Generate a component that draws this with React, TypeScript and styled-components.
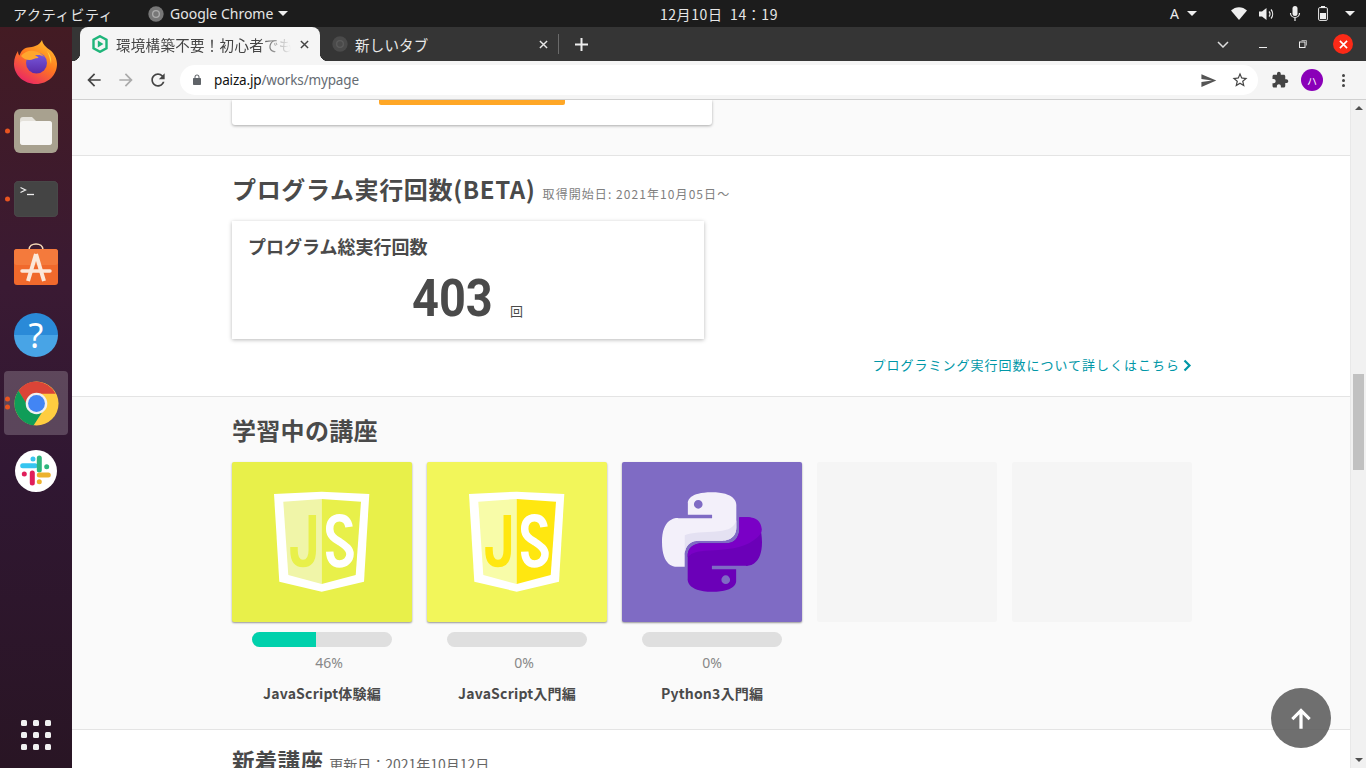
import React from 'react';
import styled, { createGlobalStyle } from 'styled-components';

const Global = createGlobalStyle`
  html, body { margin: 0; padding: 0; height: 100%; overflow: hidden; }
  body { font-family: "Noto Sans CJK JP", "Noto Sans", sans-serif; }
  * { box-sizing: border-box; }
`;

const CJK = `"Noto Sans CJK JP", "Noto Sans", sans-serif`;

const Screen = styled.div`
  width: 1366px; height: 768px; display: flex; flex-direction: column; overflow: hidden; position: relative;
`;

/* ---------- GNOME top bar ---------- */
const TopBar = styled.header`
  height: 27px; flex: none; background: #1c1c1c; color: #e6e6e6; display: grid;
  grid-template-columns: 1fr auto 1fr; align-items: center; font-size: 14px; font-family: ${CJK};
`;
const TopLeft = styled.div`display: flex; align-items: center; padding-left: 13px;`;
const Activities = styled.span`width: 135px; font-size: 14px; letter-spacing: .7px;`;
const AppName = styled.span`display: flex; align-items: center; gap: 6px; font-family: "Noto Sans", sans-serif; font-size: 14px;`;
const Clock = styled.span`font-size: 14px; letter-spacing: .6px; padding-left: 72px; white-space: pre;`;
const TopRight = styled.div`display: flex; align-items: center; justify-content: flex-end; height: 27px;`;
const Caret = styled.i`
  display: block; width: 0; height: 0; border-left: 5px solid transparent; border-right: 5px solid transparent;
  border-top: 5px solid #eee; margin-left: ${p => p.$ml ?? 0}px;
`;
const Tray = styled.span`display: flex; align-items: center; justify-content: center; margin-left: ${p => p.$ml}px;`;
const Letter = styled.span`font-family: "Noto Sans", sans-serif; font-size: 14px; color: #ececec; margin-right: 8px;`;

const Body = styled.div`flex: 1; display: flex; min-height: 0;`;

/* ---------- Ubuntu dock ---------- */
const Dock = styled.nav`
  width: 72px; flex: none; display: flex; flex-direction: column; align-items: center; padding-top: 2px;
  background: linear-gradient(180deg, #431b23 0%, #3a1a33 35%, #301732 60%, #291524 100%);
`;
const DockItem = styled.div`
  position: relative; width: 64px; height: 64px; margin: 2px 0; flex: none; display: flex; align-items: center; justify-content: center;
  border-radius: 4px; background: ${p => (p.$active ? 'rgba(255,255,255,.2)' : 'transparent')};
`;
const RunDots = styled.span`
  position: absolute; left: 1px; top: 50%; transform: translateY(-50%); display: flex; flex-direction: column; gap: 3px;
`;
const RunDot = styled.i`display: block; width: 5px; height: 5px; border-radius: 50%; background: #e95420;`;
const HelpBadge = styled.span`
  width: 44px; height: 44px; border-radius: 50%; background: linear-gradient(180deg, #2a8ad8 50%, #48a4e6 50%);
  color: #fff; font: 400 34px/44px "Noto Sans", sans-serif; text-align: center;
`;
const AppsGrid = styled.div`
  margin-top: auto; margin-bottom: 18px; display: grid; grid-template-columns: repeat(3, 6px); gap: 6px;
`;
const AppsDot = styled.i`display: block; width: 6px; height: 6px; border-radius: 1.5px; background: #f1f1f1;`;

/* ---------- Chrome frame ---------- */
const Browser = styled.div`flex: 1; min-width: 0; display: flex; flex-direction: column;`;
const TabStrip = styled.div`height: 34px; flex: none; background: #353535; display: flex; align-items: stretch; padding-left: 8px; color: #eee;`;
const ActiveTab = styled.div`
  position: relative; width: 240px; background: #f5f5f5; border-radius: 8px 8px 0 0; display: flex; align-items: center;
  padding: 0 11px 0 12px; color: #444; font-size: 14px;
  &::before, &::after {
    content: ""; position: absolute; bottom: 0; width: 8px; height: 8px;
  }
  &::before { left: -8px; background: radial-gradient(circle at 0 0, transparent 8px, #f5f5f5 8.5px); }
  &::after { right: -8px; background: radial-gradient(circle at 100% 0, transparent 8px, #f5f5f5 8.5px); }
`;
const TabTitle = styled.span`
  margin-left: 8px; width: 175px; white-space: nowrap; overflow: hidden; font-size: 14.5px; letter-spacing: .3px;
  -webkit-mask-image: linear-gradient(90deg, #000 82%, transparent 100%);
  mask-image: linear-gradient(90deg, #000 82%, transparent 100%);
`;
const TabClose = styled.span`margin-left: auto; display: flex;`;
const IdleTab = styled.div`
  width: 238px; display: flex; align-items: center; padding: 0 10px 0 12px; font-size: 14.5px; color: #e8e8e8;
`;
const IdleTitle = styled.span`margin-left: 7px; letter-spacing: .2px;`;
const TabSep = styled.i`display: block; width: 1px; height: 20px; background: #6a6a6a; align-self: center;`;
const NewTab = styled.span`display: flex; align-items: center; margin-left: 16px;`;
const WinControls = styled.div`margin-left: auto; display: flex; align-items: center; padding-right: 3px;`;
const WinBtn = styled.span`display: flex; align-items: center; justify-content: center; width: 40px;`;
const CloseCircle = styled.span`
  width: 20px; height: 20px; border-radius: 50%; background: #fb2a17; display: flex; align-items: center; justify-content: center;
`;

const Toolbar = styled.div`
  height: 39px; flex: none; background: #f5f5f5; border-bottom: 1px solid #d0d0d0; display: flex; align-items: center; padding-left: 6px;
`;
const NavBtn = styled.span`width: 32px; display: flex; align-items: center; justify-content: center; flex: none;`;
const Omnibox = styled.div`
  width: 1078px; margin-left: 6px; height: 30px; flex: none; border-radius: 15px; background: #fff; display: flex; align-items: center; padding: 0 9px 0 11px;
`;
const Domain = styled.span`margin-left: 11px; font: 13.5px "Noto Sans", sans-serif; color: #111; letter-spacing: -.15px;`;
const UrlPath = styled.span`color: #666c73;`;
const OmniEnd = styled.span`margin-left: auto; display: flex; gap: 14px; align-items: center; padding-right: 0;`;
const ToolEnd = styled.span`display: flex; align-items: center; margin-left: 6px;`;
const Avatar = styled.span`
  width: 22px; height: 22px; border-radius: 50%; background: #8a00b8; color: #fff; font-size: 10px; display: flex;
  align-items: center; justify-content: center; margin: 0 0 0 5px;
`;
const Kebab = styled.span`display: flex; flex-direction: column; gap: 2px; margin-left: 19px;`;
const KebabDot = styled.i`display: block; width: 3px; height: 3px; border-radius: 50%; background: #444;`;

/* ---------- page ---------- */
const Viewport = styled.div`flex: 1; min-height: 0; display: flex; overflow: hidden;`;
const Page = styled.main`flex: 1; min-width: 0; overflow: hidden; display: flex; flex-direction: column; border-right: 1px solid #e8e8e8;`;
const Section = styled.section`
  flex: none; height: ${p => p.$h}px; background: ${p => (p.$tint ? '#fafafa' : '#fff')};
  border-bottom: ${p => (p.$last ? 'none' : '1px solid #e4e4e4')}; padding-left: 160px; padding-top: ${p => p.$pt ?? 0}px;
`;
const OldCard = styled.div`
  width: 480px; height: 25px; background: #fff; border-radius: 0 0 3px 3px; box-shadow: 0 1px 3px rgba(0,0,0,.32); padding-left: 147px;
`;
const OrangeBtn = styled.div`width: 186px; height: 5px; background: #ffa726; border-radius: 0 0 2px 2px;`;
const HeadRow = styled.div`display: flex; align-items: baseline; height: 36px;`;
const Heading = styled.h2`
  margin: 0; font: 700 ${p => p.$size ?? 24}px/36px ${CJK}; color: #4a4a4a; letter-spacing: ${p => p.$ls ?? .65}px; white-space: nowrap;
`;
const HeadNote = styled.span`margin-left: 7px; font: 400 12px ${CJK}; color: #808080; letter-spacing: 1.07px; white-space: nowrap;`;
const UpdateNote = styled.span`margin-left: 6px; font: 400 14px ${CJK}; color: #666; white-space: nowrap;`;
const CountCard = styled.div`
  margin-top: 14px; width: 472px; height: 118px; background: #fff; box-shadow: 0 1px 4px rgba(0,0,0,.28);
  padding: 12px 16px 0; display: flex; flex-direction: column;
`;
const CardTitle = styled.div`font: 700 18px/26px ${CJK}; color: #4a4a4a;`;
const CountRow = styled.div`display: flex; align-items: baseline; margin-top: 9px; padding-left: 164px;`;
const CountNum = styled.span`
  display: inline-block; width: 79px; font: 700 51px/62px "Roboto", "Noto Sans", sans-serif; color: #4a4a4a; white-space: nowrap;
  transform: scaleX(.92); transform-origin: left center;
`;
const CountUnit = styled.span`margin-left: 19px; font: 400 13px ${CJK}; color: #4a4a4a;`;
const DetailLink = styled.a`
  margin-top: 15px; width: 960px; display: flex; justify-content: flex-end; align-items: center; gap: 3px;
  font: 400 13px/22px ${CJK}; color: #0097a7; letter-spacing: 1px; text-decoration: none;
`;
const Tiles = styled.div`margin-top: 14px; display: grid; grid-template-columns: repeat(5, 180px); column-gap: 15px;`;
const Course = styled.article`display: flex; flex-direction: column; align-items: center;`;
const Tile = styled.div`
  width: 180px; height: 160px; border-radius: 2px; background: ${p => p.$bg};
  box-shadow: ${p => (p.$flat ? 'none' : '0 1px 2px rgba(0,0,0,.4)')}; display: flex; align-items: center; justify-content: center;
`;
const Bar = styled.div`margin-top: 10px; width: 140px; height: 15px; border-radius: 8px; background: #dfdfdf; overflow: hidden;`;
const BarFill = styled.div`height: 100%; background: #00d1ac;`;
const Pct = styled.div`
  margin-top: 6px; font: 400 14px/20px "Noto Sans", sans-serif; color: #888; padding-left: ${p => p.$shift ?? 0}px;
`;
const CourseName = styled.div`margin-top: 10px; font: 700 14px/20px ${CJK}; color: #4a4a4a; letter-spacing: .2px; white-space: nowrap;`;

const Scrollbar = styled.div`width: 15px; flex: none; background: #f1f1f1; display: flex; flex-direction: column; align-items: center; position: relative;`;
const ArrowUp = styled.i`
  margin-top: 6px; width: 0; height: 0; border-left: 4px solid transparent; border-right: 4px solid transparent; border-bottom: 4px solid #505050;
`;
const Thumb = styled.div`margin-top: 264px; width: 11px; height: 96px; background: #c1c1c1;`;
const ArrowDown = styled.i`
  margin-top: auto; margin-bottom: 6px; width: 0; height: 0; border-left: 4px solid transparent; border-right: 4px solid transparent; border-top: 4px solid #505050;
`;
const ToTop = styled.button`
  position: absolute; left: 1271px; top: 688px; width: 60px; height: 60px; border: 0; border-radius: 50%;
  background: rgba(90,90,90,.87); display: flex; align-items: center; justify-content: center; padding: 0;
`;

/* ---------- drawings ---------- */
const Mat = ({ d, size = 20, fill = '#444' }: { d: string; size?: number; fill?: string }) => (
  <svg width={size} height={size} viewBox="0 0 24 24" fill={fill}><path d={d} /></svg>
);

const ChromeLogo = ({ size, mono, ring = .55 }: { size: number; mono?: string; ring?: number }) => (
  <svg width={size} height={size} viewBox="0 0 48 48">
    {mono ? (
      <>
        <circle cx="24" cy="24" r="23" fill={mono} />
        <circle cx="24" cy="24" r="12" fill="#d8d8d8" opacity={ring} />
        <circle cx="24" cy="24" r="8" fill={mono} />
      </>
    ) : (
      <>
        <circle cx="24" cy="24" r="23.5" fill="#ffcd40" />
        <path d="M24 .5A23.5 23.5 0 0 0 4.8 10.4L14 27 24 13.5h20.4A23.5 23.5 0 0 0 24 .5z" fill="#db4437" />
        <path d="M4.8 10.4A23.5 23.5 0 0 0 21 47.3L31.5 31 17 30z" fill="#0f9d58" />
        <circle cx="24" cy="24" r="11.5" fill="#f1f1f1" />
        <circle cx="24" cy="24" r="9" fill="#4285f4" />
      </>
    )}
  </svg>
);

const Firefox = () => (
  <svg width="46" height="48" viewBox="0 0 46 48">
    <defs>
      <linearGradient id="ffa" x1=".8" y1="0" x2=".2" y2="1">
        <stop offset="0" stopColor="#ffc22e" /><stop offset=".45" stopColor="#ff7a1f" /><stop offset="1" stopColor="#e8206a" />
      </linearGradient>
      <linearGradient id="ffb" x1=".5" y1="0" x2=".5" y2="1">
        <stop offset="0" stopColor="#7a5de0" /><stop offset="1" stopColor="#5a2aa8" />
      </linearGradient>
    </defs>
    <path d="M29 1c1 5 4 7 8 10 5 4 7 10 7 14 0 11-9 20-21 20C11 45 1 36 1 25c0-6 2-10 4-13 0 2 .5 3.500 1.500 4.500C8 12 11 9 15 8.500 20 8 26 7 29 1z" fill="url(#ffa)" />
    <circle cx="23.500" cy="24" r="10.500" fill="url(#ffb)" />
    <path d="M8 17c3-4 8-6 13-5 5 .8 8 3 10 6-3-2-6-2.500-9-1.500 2 .5 3 1.500 3.500 2.500-4 0-6 2-9 2-3.500 0-6-1.500-8.500-4z" fill="#ffa62e" />
    <path d="M34 12c3 3 5 8 4 13-1-5-2-9-4-13z" fill="#ffd23f" />
  </svg>
);

const Files = () => (
  <svg width="44" height="44" viewBox="0 0 44 44">
    <rect width="44" height="44" rx="6" fill="#a8a18f" />
    <path d="M6 11a3 3 0 0 1 3-3h9l4 4h13a3 3 0 0 1 3 3v18a3 3 0 0 1-3 3H9a3 3 0 0 1-3-3z" fill="#e4e1da" />
    <rect x="6" y="12" width="32" height="24" rx="3" fill="#f7f6f4" />
  </svg>
);

const Terminal = () => (
  <svg width="44" height="36" viewBox="0 0 44 36">
    <rect width="44" height="36" rx="5" fill="#444" stroke="#555" strokeWidth=".6" />
    <path d="M6.500 6.500l5 2.500-5 2.500" stroke="#eee" strokeWidth="1.300" fill="none" />
    <path d="M13 13.500h7" stroke="#eee" strokeWidth="1.300" />
  </svg>
);

const Store = () => (
  <svg width="44" height="44" viewBox="0 0 44 44" overflow="visible">
    <path d="M15 5c0-8 14-8 14 0" stroke="#f6d9b8" strokeWidth="1.600" fill="none" />
    <rect y="4" width="44" height="36" rx="3" fill="#f0692c" />
    <rect y="4" width="44" height="16" rx="3" fill="#f47a3c" />
    <path d="M22 9l-8 27M22 9l8 27" stroke="#fbe7d9" strokeWidth="4" fill="none" />
    <path d="M8 26h28" stroke="#fbe7d9" strokeWidth="3.500" strokeLinecap="round" />
  </svg>
);

const Slack = () => (
  <svg width="42" height="42" viewBox="0 0 42 42">
    <circle cx="21" cy="21" r="21" fill="#fff" />
    <g strokeWidth="5" strokeLinecap="round" fill="none">
      <path d="M7.700 15.700H20M18 9v0" stroke="#36c5f0" />
      <path d="M24.300 8v12M31.700 16.700v0" stroke="#2eb67d" />
      <path d="M24.300 25H33.300M24.300 31.700v0" stroke="#ecb22e" />
      <path d="M17.300 23v10M9.300 24v0" stroke="#e01e5a" />
    </g>
  </svg>
);

const PaizaIcon = () => (
  <svg width="16" height="18" viewBox="0 0 16 18">
    <path d="M8 1.200l6.500 3.600v8.400L8 16.800l-6.500-3.600V4.800z" fill="none" stroke="#1fb57a" strokeWidth="2.400" />
    <path d="M5.800 5.500l5.600 3.500-5.600 3.500z" fill="#1fb57a" />
  </svg>
);

const Cross = ({ color = '#444', size = 9, w = 1.6 }: { color?: string; size?: number; w?: number }) => (
  <svg width={size} height={size} viewBox="0 0 10 10"><path d="M1 1l8 8M9 1l-8 8" stroke={color} strokeWidth={w} /></svg>
);

const JsShield = ({ left, right, j }: { left: string; right: string; j: string }) => (
  <svg width="180" height="160" viewBox="0 0 180 160">
    <path d="M42 32L89.700 29.700 137.300 32 132 119.700 89.700 129.700 47.300 119.700z" fill="#fff" />
    <path d="M51.300 39.700L89.700 37V122L56.300 113z" fill={left} />
    <path d="M89.700 37L129 39.700 123.700 113 89.700 122z" fill={right} />
    <path d="M80.300 53V88C80.300 97 77 101.500 71 101.500 65 101.500 62 97 62 88V85" stroke={j} strokeWidth="7.500" fill="none" />
    <path d="M117 65C116 58 112 55.700 107.500 55.700 101 55.700 97.700 60.500 97.700 67 97.700 74 103 77 108 80 114 84 118 87 118 92 118 98 113 102 107.500 102 101 102 98 97 97.700 89.700" stroke="#fff" strokeWidth="7.500" fill="none" />
  </svg>
);

const PythonLogo = () => (
  <svg width="100" height="100" viewBox="0 0 110.600 110">
    <path d="M54.900 0C26.800 0 28.600 12.200 28.600 12.200l0 12.600h26.800v3.800H18S0 26.500 0 55c0 28.400 15.700 27.400 15.700 27.400h9.400V69.200s-.5-15.700 15.500-15.700h26.600s15 .2 15-14.500V14.700S84.500 0 54.900 0zM40.100 8.500a4.800 4.800 0 1 1 0 9.600 4.800 4.800 0 0 1 0-9.600z" fill="#f3f0fa" />
    <path d="M25.100 69.200s-.5-15.700 15.500-15.700h26.600s15 .2 15-14.500v-8c-2 8-8 11-20 12-16 1.300-30 1-37 4.500z" fill="#e4e1f2" />
    <path d="M55.700 110c28.100 0 26.300-12.200 26.300-12.200V85.200H55.200v-3.800h37.400S110.600 83.500 110.600 55c0-28.400-15.700-27.400-15.700-27.400h-9.400v13.200s.5 15.700-15.500 15.700H43.400s-15-.2-15 14.500v24.300S26.100 110 55.700 110zm14.800-8.500a4.800 4.800 0 1 1 0-9.600 4.800 4.800 0 0 1 0 9.600z" fill="#6b00b8" />
    <path d="M85.500 40.800s.5 15.700-15.500 15.700H43.400s-15-.2-15 14.500v1c5-7 14-7 30-8 20-1 36-4 47-14 3-3 5-5 5-9-1-9-6-13.500-15.600-13.400h-9.400z" fill="#7a00c6" />
  </svg>
);

const courses = [
  { name: 'JavaScript体験編', pct: 46, shift: 14, bg: '#e8f04a', art: <JsShield left="#f0f5a8" right="#e8f04a" j="#e8f04a" /> },
  { name: 'JavaScript入門編', pct: 0, shift: 14, bg: '#f2f65a', art: <JsShield left="#f8fca8" right="#ffe710" j="#ffe710" /> },
  { name: 'Python3入門編', pct: 0, shift: 0, bg: '#7f6bc4', art: <PythonLogo /> },
];

export default function App() {
  return (
    <Screen>
      <Global />
      <TopBar>
        <TopLeft>
          <Activities>アクティビティ</Activities>
          <AppName>
            <ChromeLogo size={16} mono="#777" />
            Google Chrome
            <Caret $ml={-1} />
          </AppName>
        </TopLeft>
        <Clock>12月10日  14：19</Clock>
        <TopRight>
          <Letter>A</Letter>
          <Caret />
          <Tray $ml={34}>
            <svg width="16" height="13" viewBox="0 0 16 13"><path d="M0 3.500C4.500-1 11.500-1 16 3.500L8 13z" fill="#eee" /></svg>
          </Tray>
          <Tray $ml={12}>
            <svg width="16" height="14" viewBox="0 0 16 14"><path d="M0 4.500h3L7.500 1v12L3 9.500H0z" fill="#eee" /><path d="M10 4.500a3.500 3.500 0 0 1 0 5M12 2.500a7 7 0 0 1 0 9" stroke="#eee" strokeWidth="1.200" fill="none" /></svg>
          </Tray>
          <Tray $ml={14}>
            <svg width="12" height="16" viewBox="0 0 12 16"><rect x="3.500" y="0" width="5" height="10" rx="2.500" fill="#eee" /><path d="M1.500 7a4.500 4.500 0 0 0 9 0M6 11.500V15" stroke="#eee" strokeWidth="1.200" fill="none" /></svg>
          </Tray>
          <Tray $ml={17}>
            <svg width="10" height="15" viewBox="0 0 10 15"><rect x=".6" y="1.600" width="8.800" height="12.800" rx="1.200" fill="none" stroke="#eee" strokeWidth="1" /><rect x="3" y="0" width="4" height="2" fill="#eee" /><rect x="2" y="7" width="6" height="6" fill="#eee" /></svg>
          </Tray>
          <Caret $ml={17} />
          <Tray $ml={11} />
        </TopRight>
      </TopBar>
      <Body>
        <Dock>
          <DockItem><Firefox /></DockItem>
          <DockItem><RunDots><RunDot /></RunDots><Files /></DockItem>
          <DockItem><RunDots><RunDot /></RunDots><Terminal /></DockItem>
          <DockItem><Store /></DockItem>
          <DockItem><HelpBadge>?</HelpBadge></DockItem>
          <DockItem $active><RunDots><RunDot /><RunDot /></RunDots><ChromeLogo size={45} /></DockItem>
          <DockItem><Slack /></DockItem>
          <AppsGrid>{Array.from({ length: 9 }, (_, i) => <AppsDot key={i} />)}</AppsGrid>
        </Dock>
        <Browser>
          <TabStrip>
            <ActiveTab>
              <PaizaIcon />
              <TabTitle>環境構築不要！初心者でも</TabTitle>
              <TabClose><Cross /></TabClose>
            </ActiveTab>
            <IdleTab>
              <ChromeLogo size={16} mono="#4a4a4a" ring={.12} />
              <IdleTitle>新しいタブ</IdleTitle>
              <TabClose><Cross color="#e8e8e8" /></TabClose>
            </IdleTab>
            <TabSep />
            <NewTab>
              <svg width="13" height="13" viewBox="0 0 13 13"><path d="M6.500 0v13M0 6.500h13" stroke="#eee" strokeWidth="2" /></svg>
            </NewTab>
            <WinControls>
              <WinBtn>
                <svg width="12" height="7" viewBox="0 0 12 7"><path d="M1 1l5 5 5-5" stroke="#ddd" strokeWidth="1.500" fill="none" /></svg>
              </WinBtn>
              <WinBtn>
                <svg width="8" height="8" viewBox="0 0 8 8"><path d="M0 7.500h8" stroke="#eee" strokeWidth="1" /></svg>
              </WinBtn>
              <WinBtn>
                <svg width="8" height="8" viewBox="0 0 8 8"><rect x=".5" y="2" width="5.500" height="5.500" fill="none" stroke="#eee" /><path d="M2.500 .5h5v5" fill="none" stroke="#aaa" /></svg>
              </WinBtn>
              <WinBtn>
                <CloseCircle><Cross color="#fff" size={9} w={1.8} /></CloseCircle>
              </WinBtn>
            </WinControls>
          </TabStrip>
          <Toolbar>
            <NavBtn><Mat d="M20 11H7.830l5.590-5.590L12 4l-8 8 8 8 1.410-1.410L7.830 13H20v-2z" /></NavBtn>
            <NavBtn><Mat fill="#aaa" d="M12 4l-1.410 1.410L16.170 11H4v2h12.170l-5.580 5.590L12 20l8-8z" /></NavBtn>
            <NavBtn><Mat d="M17.650 6.350C16.200 4.900 14.210 4 12 4c-4.420 0-7.990 3.580-7.990 8s3.570 8 7.990 8c3.730 0 6.840-2.550 7.730-6h-2.080c-.82 2.330-3.040 4-5.650 4-3.310 0-6-2.690-6-6s2.690-6 6-6c1.660 0 3.140.69 4.220 1.780L13 11h7V4l-2.350 2.350z" /></NavBtn>
            <Omnibox>
              <Mat size={12} fill="#5f6368" d="M18 8h-1V6c0-2.760-2.240-5-5-5S7 3.240 7 6v2H6c-1.100 0-2 .9-2 2v10c0 1.100.9 2 2 2h12c1.100 0 2-.9 2-2V10c0-1.100-.9-2-2-2zM9 6c0-1.660 1.340-3 3-3s3 1.340 3 3v2H9V6z" />
              <Domain>paiza.jp<UrlPath>/works/mypage</UrlPath></Domain>
              <OmniEnd>
                <Mat size={17} fill="#555" d="M2.010 21L23 12 2.010 3 2 10l15 2-15 2z" />
                <Mat size={18} d="M22 9.240l-7.190-.62L12 2 9.190 8.630 2 9.240l5.460 4.730L5.820 21 12 17.270 18.180 21l-1.630-7.030L22 9.240zM12 15.400l-3.760 2.270 1-4.280-3.320-2.880 4.380-.38L12 6.100l1.710 4.040 4.380.38-3.320 2.880 1 4.280L12 15.400z" />
              </OmniEnd>
            </Omnibox>
            <ToolEnd>
              <NavBtn><Mat size={18} d="M20.500 11H19V7c0-1.100-.9-2-2-2h-4V3.500C13 2.120 11.880 1 10.500 1S8 2.120 8 3.500V5H4c-1.100 0-1.990.9-1.990 2v3.800H3.500c1.490 0 2.700 1.210 2.700 2.700s-1.210 2.700-2.700 2.700H2V20c0 1.100.9 2 2 2h3.800v-1.500c0-1.490 1.210-2.700 2.700-2.700 1.490 0 2.700 1.210 2.700 2.700V22H17c1.100 0 2-.9 2-2v-4h1.500c1.380 0 2.500-1.120 2.500-2.500S21.880 11 20.500 11z" /></NavBtn>
              <Avatar>ハ</Avatar>
              <Kebab><KebabDot /><KebabDot /><KebabDot /></Kebab>
            </ToolEnd>
          </Toolbar>
          <Viewport>
            <Page>
              <Section $h={56} $tint><OldCard><OrangeBtn /></OldCard></Section>
              <Section $h={241} $pt={15}>
                <HeadRow>
                  <Heading>プログラム実行回数(BETA)</Heading>
                  <HeadNote>取得開始日: 2021年10月05日〜</HeadNote>
                </HeadRow>
                <CountCard>
                  <CardTitle>プログラム総実行回数</CardTitle>
                  <CountRow><CountNum>403</CountNum><CountUnit>回</CountUnit></CountRow>
                </CountCard>
                <DetailLink href="#">
                  プログラミング実行回数について詳しくはこちら
                  <svg width="9" height="13" viewBox="0 0 9 13"><path d="M1.500 1.500l5 5-5 5" stroke="#0097a7" strokeWidth="2.200" fill="none" /></svg>
                </DetailLink>
              </Section>
              <Section $h={333} $tint $pt={15}>
                <HeadRow><Heading $ls={.3}>学習中の講座</Heading></HeadRow>
                <Tiles>
                  {courses.map(c => (
                    <Course key={c.name}>
                      <Tile $bg={c.bg}>{c.art}</Tile>
                      <Bar><BarFill style={{ width: `${c.pct}%` }} /></Bar>
                      <Pct $shift={c.shift}>{c.pct}%</Pct>
                      <CourseName>{c.name}</CourseName>
                    </Course>
                  ))}
                  <Course><Tile $bg="#f5f5f5" $flat /></Course>
                  <Course><Tile $bg="#f5f5f5" $flat /></Course>
                </Tiles>
              </Section>
              <Section $h={60} $last $pt={12}>
                <HeadRow>
                  <Heading $size={22.5} $ls={.3}>新着講座</Heading>
                  <UpdateNote>更新日：2021年10月12日</UpdateNote>
                </HeadRow>
              </Section>
            </Page>
            <Scrollbar>
              <ArrowUp />
              <Thumb />
              <ArrowDown />
            </Scrollbar>
          </Viewport>
        </Browser>
      </Body>
      <ToTop aria-label="ページ上部へ">
        <Mat size={26} fill="#fff" d="M3 12l2 2 5.500-5.500V22h3V8.500L19 14l2-2-9-9z" />
      </ToTop>
    </Screen>
  );
}
